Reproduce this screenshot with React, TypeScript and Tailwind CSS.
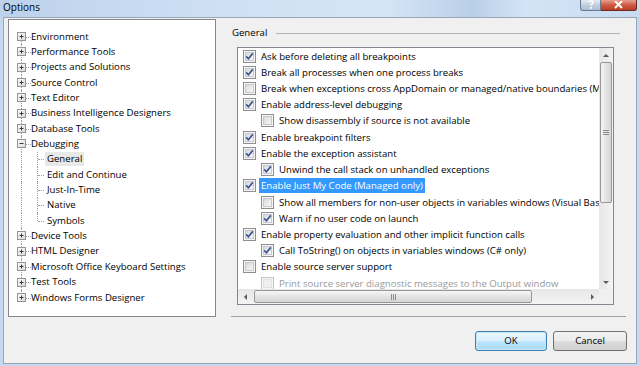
import React from "react";

const FONT = { fontFamily: '"Open Sans", "Noto Sans", sans-serif' };

type TreeItem = {
  label: string;
  kind: "root" | "child";
  expanded?: boolean;
  first?: boolean;
  last?: boolean;
  lastChild?: boolean;
  selected?: boolean;
};

const tree: TreeItem[] = [
  { label: "Environment", kind: "root", first: true },
  { label: "Performance Tools", kind: "root" },
  { label: "Projects and Solutions", kind: "root" },
  { label: "Source Control", kind: "root" },
  { label: "Text Editor", kind: "root" },
  { label: "Business Intelligence Designers", kind: "root" },
  { label: "Database Tools", kind: "root" },
  { label: "Debugging", kind: "root", expanded: true },
  { label: "General", kind: "child", selected: true },
  { label: "Edit and Continue", kind: "child" },
  { label: "Just-In-Time", kind: "child" },
  { label: "Native", kind: "child" },
  { label: "Symbols", kind: "child", lastChild: true },
  { label: "Device Tools", kind: "root" },
  { label: "HTML Designer", kind: "root" },
  { label: "Microsoft Office Keyboard Settings", kind: "root" },
  { label: "Test Tools", kind: "root" },
  { label: "Windows Forms Designer", kind: "root", last: true },
];

type Opt = {
  label: string;
  checked: boolean;
  indent?: boolean;
  selected?: boolean;
  disabled?: boolean;
};

const options: Opt[] = [
  { label: "Ask before deleting all breakpoints", checked: true },
  { label: "Break all processes when one process breaks", checked: true },
  {
    label:
      "Break when exceptions cross AppDomain or managed/native boundaries (Managed only)",
    checked: false,
  },
  { label: "Enable address-level debugging", checked: true },
  { label: "Show disassembly if source is not available", checked: false, indent: true },
  { label: "Enable breakpoint filters", checked: true },
  { label: "Enable the exception assistant", checked: true },
  { label: "Unwind the call stack on unhandled exceptions", checked: true, indent: true },
  { label: "Enable Just My Code (Managed only)", checked: true, selected: true },
  {
    label:
      "Show all members for non-user objects in variables windows (Visual Basic only)",
    checked: false,
    indent: true,
  },
  { label: "Warn if no user code on launch", checked: true, indent: true },
  { label: "Enable property evaluation and other implicit function calls", checked: true },
  {
    label: "Call ToString() on objects in variables windows (C# only)",
    checked: true,
    indent: true,
  },
  { label: "Enable source server support", checked: false },
  {
    label: "Print source server diagnostic messages to the Output window",
    checked: false,
    indent: true,
    disabled: true,
  },
];

function Expander({ open }: { open?: boolean }) {
  return (
    <svg width="9" height="9" viewBox="0 0 9 9">
      <defs>
        <linearGradient id="exp" x1="0" y1="0" x2="1" y2="1">
          <stop offset="0" stopColor="#ffffff" />
          <stop offset="1" stopColor="#d8d8d8" />
        </linearGradient>
      </defs>
      <rect x="0.5" y="0.5" width="8" height="8" fill="url(#exp)" stroke="#949494" />
      <path d="M2.5 4.5h4" stroke="#2c3b55" strokeWidth="1" />
      {!open && <path d="M4.5 2.5v4" stroke="#2c3b55" strokeWidth="1" />}
    </svg>
  );
}

function TreeRow({ item }: { item: TreeItem }) {
  if (item.kind === "root") {
    return (
      <div className="flex h-[15.35px] items-center whitespace-nowrap">
        <div className="relative h-full w-[22px] shrink-0">
          <div
            className={
              "absolute left-[12px] border-l border-dotted border-[#a0a0a0] " +
              (item.first ? "top-1/2 bottom-0" : item.last ? "top-0 bottom-1/2" : "top-0 bottom-0")
            }
          />
          <div className="absolute left-[17px] top-1/2 w-[5px] border-t border-dotted border-[#a0a0a0]" />
          <div className="absolute left-[8px] top-[3px]">
            <Expander open={item.expanded} />
          </div>
        </div>
        <span className="text-[9.6px] leading-[14px] text-black">{item.label}</span>
      </div>
    );
  }
  return (
    <div className="flex h-[15.35px] items-center whitespace-nowrap">
      <div className="relative h-full w-[36px] shrink-0">
        <div className="absolute left-[12px] top-0 bottom-0 border-l border-dotted border-[#a0a0a0]" />
        <div
          className={
            "absolute left-[28px] top-0 border-l border-dotted border-[#a0a0a0] " +
            (item.lastChild ? "bottom-1/2" : "bottom-0")
          }
        />
        <div className="absolute left-[29px] top-1/2 w-[6px] border-t border-dotted border-[#a0a0a0]" />
      </div>
      <span
        className={
          "px-[2px] text-[9.6px] leading-[14px] text-black " +
          (item.selected ? "bg-[#e8e8e8]" : "")
        }
      >
        {item.label}
      </span>
    </div>
  );
}

function CheckBox({ checked, disabled }: { checked: boolean; disabled?: boolean }) {
  return (
    <svg width="13" height="13" viewBox="0 0 13 13" className="shrink-0">
      <defs>
        <linearGradient id="cb" x1="0" y1="0" x2="1" y2="1">
          <stop offset="0" stopColor="#d5d8dc" />
          <stop offset="1" stopColor="#fafafa" />
        </linearGradient>
      </defs>
      <rect
        x="0.5"
        y="0.5"
        width="12"
        height="12"
        fill="#f6f6f6"
        stroke={disabled ? "#c4c4c4" : "#8f8f8f"}
      />
      <rect
        x="2.5"
        y="2.5"
        width="8"
        height="8"
        fill={disabled ? "#f0f0f0" : "url(#cb)"}
        stroke={disabled ? "#e2e2e2" : "#c6c9ce"}
      />
      {checked && (
        <path
          d="M3.2 6.4 L5.4 8.8 L9.8 3.4"
          fill="none"
          stroke="#3e5590"
          strokeWidth="1.7"
        />
      )}
    </svg>
  );
}

function OptionRow({ opt }: { opt: Opt }) {
  return (
    <div
      className={
        "flex h-[16.23px] shrink-0 items-center whitespace-nowrap " +
        (opt.indent ? "pl-[23px]" : "pl-[5px]")
      }
    >
      <CheckBox checked={opt.checked} disabled={opt.disabled} />
      <span
        className={
          "ml-[3px] px-[2px] text-[9.6px] leading-[15px] " +
          (opt.selected
            ? "bg-[#3399ff] text-white"
            : opt.disabled
            ? "text-[#9a9a9a]"
            : "text-black")
        }
      >
        {opt.label}
      </span>
    </div>
  );
}

function Arrow({ dir }: { dir: "up" | "down" | "left" | "right" }) {
  const d = {
    up: "M1 4 L4 1 L7 4 Z",
    down: "M1 1 L4 4 L7 1 Z",
    left: "M4 1 L1 4 L4 7 Z",
    right: "M1 1 L4 4 L1 7 Z",
  }[dir];
  const vertical = dir === "up" || dir === "down";
  return (
    <svg
      width={vertical ? 8 : 5}
      height={vertical ? 5 : 8}
      viewBox={vertical ? "0 0 8 5" : "0 0 5 8"}
    >
      <path d={d} fill="#5a5a5a" />
    </svg>
  );
}

function VScroll() {
  return (
    <div className="flex w-[14px] shrink-0 flex-col bg-[linear-gradient(90deg,#e6e6e6,#f4f4f4)]">
      <div className="flex h-[14px] items-center justify-center">
        <Arrow dir="up" />
      </div>
      <div className="mx-[1px] flex h-[141px] items-center justify-center rounded-[2px] border border-[#979797] bg-[linear-gradient(90deg,#f6f6f6,#e4e4e4_50%,#d5d5d5)]">
        <div className="flex w-[6px] flex-col gap-[1px]">
          <div className="h-px bg-[#8a8a8a]" />
          <div className="h-px bg-[#8a8a8a]" />
          <div className="h-px bg-[#8a8a8a]" />
        </div>
      </div>
      <div className="flex-1" />
      <div className="flex h-[14px] items-center justify-center">
        <Arrow dir="down" />
      </div>
    </div>
  );
}

function HScroll() {
  return (
    <div className="flex h-[15px] flex-1 items-stretch bg-[linear-gradient(180deg,#e6e6e6,#f4f4f4)]">
      <div className="flex w-[14px] items-center justify-center">
        <Arrow dir="left" />
      </div>
      <div className="my-[1px] ml-[2px] flex w-[278px] items-center justify-center rounded-[2px] border border-[#979797] bg-[linear-gradient(180deg,#f6f6f6,#e4e4e4_50%,#d5d5d5)]">
        <div className="flex h-[6px] flex-row gap-[1px]">
          <div className="w-px bg-[#8a8a8a]" />
          <div className="w-px bg-[#8a8a8a]" />
          <div className="w-px bg-[#8a8a8a]" />
        </div>
      </div>
      <div className="flex-1" />
      <div className="flex w-[14px] items-center justify-center">
        <Arrow dir="right" />
      </div>
    </div>
  );
}

export default function App() {
  return (
    <div
      className="flex h-[366px] w-[640px] flex-col overflow-hidden bg-[#c4d8ef]"
      style={FONT}
    >
      {/* title bar */}
      <div className="flex h-[17px] shrink-0 items-start bg-[linear-gradient(90deg,#bcd2eb_0%,#cfe0f4_35%,#d6e5f6_60%,#b9cfe8_74%,#d4e4f6_82%,#c8dbf1_100%)]">
        <span className="pl-[3px] pt-[1px] text-[10px] leading-[13px] text-black">Options</span>
        <div className="ml-auto mr-[3px] flex">
          <div className="flex h-[11px] w-[21px] items-end justify-center rounded-bl-[3px] border border-t-0 border-[#6b7a92] bg-[linear-gradient(180deg,#e4ebf4,#c3d0e1_50%,#aebdd3)]">
            <svg width="6" height="9" viewBox="0 0 6 9" className="mb-[1px]">
              <path
                d="M1 2.2 C1 0.6 5 0.6 5 2.4 C5 3.8 3 3.8 3 5.6"
                fill="none"
                stroke="#ffffff"
                strokeWidth="1.6"
              />
              <rect x="2.1" y="7" width="1.8" height="1.8" fill="#ffffff" />
            </svg>
          </div>
          <div className="flex h-[11px] w-[36px] items-end justify-center rounded-br-[3px] border border-l-0 border-t-0 border-[#6e2a20] bg-[linear-gradient(180deg,#e7a08f,#cf5a44_50%,#b8402a)]">
            <svg width="9" height="8" viewBox="0 0 9 8" className="mb-[1px]">
              <path d="M1 0 L8 7 M8 0 L1 7" stroke="#ffffff" strokeWidth="2" />
            </svg>
          </div>
        </div>
      </div>

      {/* client area */}
      <div className="mx-[3px] flex h-[347px] shrink-0 border border-[#9aa6b5] bg-[#f0f0f0] pl-[4px] pt-[1px]">
        {/* tree */}
        <div className="h-[298px] w-[208px] shrink-0 overflow-hidden border border-[#828790] bg-white pt-[9px]">
          {tree.map((t) => (
            <TreeRow key={t.label} item={t} />
          ))}
        </div>

        {/* right side */}
        <div className="ml-[15px] flex w-[396px] shrink-0 flex-col">
          <div className="flex h-[28px] items-center pl-[1px] pr-[7px]">
            <span className="text-[9.6px] leading-[14px] text-black">General</span>
            <div className="ml-[9px] h-px flex-1 bg-[#b4b4b4]" />
          </div>

          <div className="ml-[6px] flex h-[258px] w-[377px] flex-col border border-[#828790] bg-white">
            <div className="flex h-[241px]">
              <div className="flex flex-1 flex-col overflow-hidden">
                {options.map((o) => (
                  <OptionRow key={o.label} opt={o} />
                ))}
              </div>
              <VScroll />
            </div>
            <div className="flex h-[15px]">
              <HScroll />
              <div className="w-[14px] bg-[#f0f0f0]" />
            </div>
          </div>

          <div className="mt-[11px] h-px w-[395px] bg-[#a0a0a0]" />

          <div className="mt-[14px] flex justify-end gap-[6px]">
            <button className="flex h-[20px] w-[72px] items-center justify-center rounded-[3px] border border-[#3c7fb1] bg-[linear-gradient(180deg,#eaf6fd,#d9f0fc_50%,#bee6fd_51%,#a7d9f5)] text-[9.6px] text-black shadow-[inset_0_0_0_1px_#c4e5f6]">
              OK
            </button>
            <button className="flex h-[20px] w-[74px] items-center justify-center rounded-[3px] border border-[#707070] bg-[linear-gradient(180deg,#f2f2f2,#ebebeb_50%,#dddddd_51%,#cfcfcf)] text-[9.6px] text-black">
              Cancel
            </button>
          </div>
        </div>
      </div>
    </div>
  );
}
